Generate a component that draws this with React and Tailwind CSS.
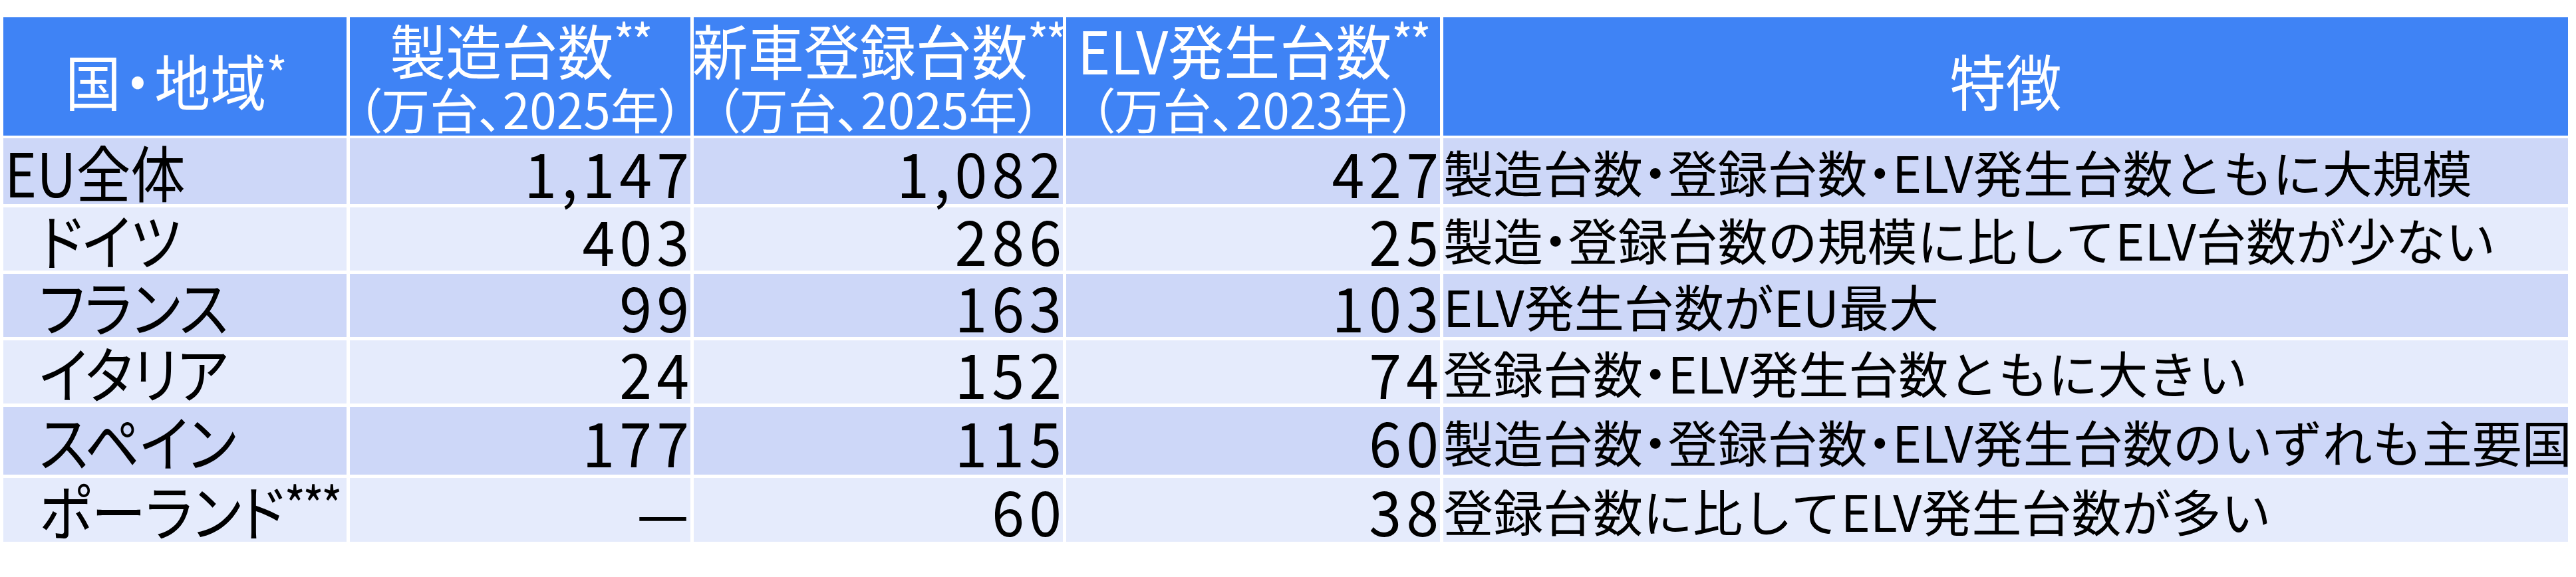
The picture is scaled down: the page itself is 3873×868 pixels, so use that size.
const font = { fontFamily: '"Noto Sans CJK JP", "Noto Sans", sans-serif' };

const cols = "grid grid-cols-[516px_512px_555px_562px_1691px] gap-x-[5px]";

const rows = [
  { name: "EU全体", top: true, a: "1,147", b: "1,082", c: "427", note: "製造台数・登録台数・ELV発生台数ともに大規模", dark: true, h: "h-[99px]" },
  { name: "ドイツ", a: "403", b: "286", c: "25", note: "製造・登録台数の規模に比してELV台数が少ない", h: "h-[95px]" },
  { name: "フランス", a: "99", b: "163", c: "103", note: "ELV発生台数がEU最大", dark: true, h: "h-[95px]" },
  { name: "イタリア", a: "24", b: "152", c: "74", note: "登録台数・ELV発生台数ともに大きい", h: "h-[95px]" },
  { name: "スペイン", a: "177", b: "115", c: "60", note: "製造台数・登録台数・ELV発生台数のいずれも主要国", dark: true, h: "h-[102px]" },
  { name: "ポーランド", star: "***", a: "—", b: "60", c: "38", note: "登録台数に比してELV発生台数が多い", h: "h-[96px]" },
];

// narrow middle dot, glyph centred in its box
function Dot({ w }) {
  return <span className={`inline-flex justify-center ${w}`}><span>・</span></span>;
}

function Note({ text }) {
  const parts = text.split("・");
  return (
    <>
      {parts.map((p, i) => (
        <span key={i}>
          {i > 0 && <Dot w="w-[0.5em]" />}
          {p}
        </span>
      ))}
    </>
  );
}

function Star({ children, dark }) {
  return (
    <span className={`align-top text-[68px] leading-none relative top-[-2px] tracking-[-4px] ${dark ? "text-black" : "text-white"}`}>
      {children}
    </span>
  );
}

function HeadTwo({ title, sub }) {
  return (
    <div className="bg-[#3f83f5] flex flex-col items-center pt-[2px] text-white whitespace-nowrap">
      <div className="text-[84px] leading-[92px] scale-y-[1.06]">
        {title}
        <Star>**</Star>
      </div>
      <div className="text-[73px] leading-[84px]">{sub}</div>
    </div>
  );
}

export default function App() {
  return (
    <div
      className="w-[3873px] h-[868px] bg-white pl-[5px] pt-[26px] overflow-hidden [font-feature-settings:'palt']"
      style={font}
    >
      <div className={`${cols} h-[168px]`}>
        <div className="bg-[#3f83f5] flex items-center justify-center pt-[10px] text-white text-[84px] leading-none whitespace-nowrap">
          <span className="inline-block scale-y-[1.08]">
            国<Dot w="w-[0.6em]" />地域
            <Star>*</Star>
          </span>
        </div>
        <HeadTwo title="製造台数" sub="（万台、2025年）" />
        <HeadTwo title="新車登録台数" sub="（万台、2025年）" />
        <HeadTwo title="ELV発生台数" sub="（万台、2023年）" />
        <div className="bg-[#3f83f5] flex items-center justify-center pt-[10px] text-white text-[84px] leading-none">
          <span className="inline-block scale-y-[1.08]">特徴</span>
        </div>
      </div>

      <div className="mt-[14px] flex flex-col gap-[5px] text-black">
        {rows.map((r) => (
          <div key={r.name} className={`${cols} ${r.h}`}>
            {[0, 1, 2, 3, 4].map((i) => {
              const bg = r.dark ? "bg-[#cdd7f8]" : "bg-[#e5ebfc]";
              if (i === 0)
                return (
                  <div key={i} className={`${bg} flex items-center whitespace-nowrap ${r.top ? "pl-[2px]" : "pl-[54px]"}`}>
                    <span className="inline-block text-[82px] leading-none scale-y-[1.12] origin-center">
                      {r.name}
                      {r.star && <Star dark>{r.star}</Star>}
                    </span>
                  </div>
                );
              if (i === 4)
                return (
                  <div key={i} className={`${bg} flex items-center whitespace-nowrap`}>
                    <span className="inline-block text-[75px] leading-none [font-feature-settings:normal]">
                      <Note text={r.note} />
                    </span>
                  </div>
                );
              const v = i === 1 ? r.a : i === 2 ? r.b : r.c;
              return (
                <div key={i} className={bg}>
                  <div className="h-full flex items-center justify-end pr-[2px]">
                    <span className="inline-block text-[88px] leading-none tracking-[7px] mr-[-7px] scale-y-[1.06]">{v}</span>
                  </div>
                </div>
              );
            })}
          </div>
        ))}
      </div>
    </div>
  );
}
